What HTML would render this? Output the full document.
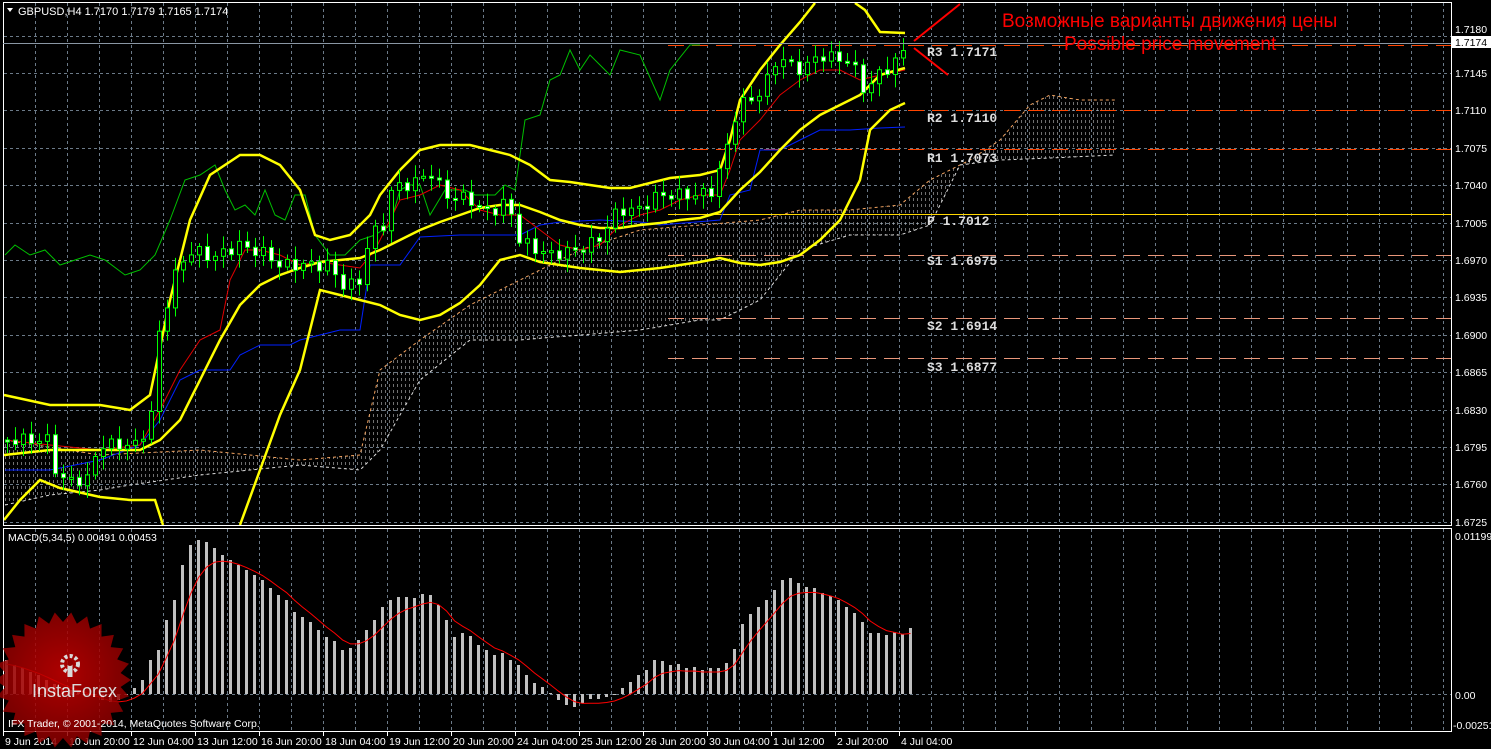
<!DOCTYPE html>
<html><head><meta charset="utf-8"><style>
html,body{margin:0;padding:0;background:#000;width:1491px;height:749px;overflow:hidden}
svg{display:block}
text{font-family:"Liberation Sans",sans-serif}
</style></head><body>
<svg id="s" width="1491" height="749" xmlns="http://www.w3.org/2000/svg">
<defs>
<pattern id="hatch" width="4" height="6" patternUnits="userSpaceOnUse"><rect x="1" y="0" width="1" height="3" fill="#bbb"/></pattern>
<radialGradient id="lg" cx="50%" cy="45%" r="55%"><stop offset="0" stop-color="#c00"/><stop offset="1" stop-color="#800"/></radialGradient>
</defs>
<rect width="1491" height="749" fill="#000"/>
<g id="grid" stroke="#6b7a88" stroke-width="1" stroke-dasharray="3,3"></g>
<g id="cloud"></g>
<g id="piv"></g>
<g id="lines" fill="none"></g>
<g id="candles"></g>
<g id="macd"></g>
<rect x="3.5" y="2.5" width="1448" height="523" fill="none" stroke="#fff"/>
<rect x="3.5" y="528.5" width="1448" height="203" fill="none" stroke="#fff"/>
<line x1="3" y1="43.5" x2="1451" y2="43.5" stroke="#8a97a4"/>
<path d="M7 8 L13 8 L10 12 Z" fill="#fff"/>
<text x="18" y="15" font-size="11" fill="#fff">GBPUSD,H4  1.7170 1.7179 1.7165 1.7174</text>
<text x="8" y="541" font-size="10.5" fill="#fff">MACD(5,34,5) 0.00491 0.00453</text>
<g font-size="10.5" fill="#fff" id="ylab"></g>
<rect x="1452" y="36" width="39" height="12" fill="#fff"/>
<text x="1455" y="46" font-size="10.5" fill="#000">1.7174</text>
<g font-size="10.5" fill="#fff">
<text x="1455" y="540">0.01199</text>
<text x="1455" y="699">0.00</text>
<text x="1453" y="729">-0.00251</text>
</g>
<g font-size="10.5" fill="#fff" id="xlab"></g>
<g font-weight="bold" font-size="13" fill="#ddd">
<text x="927" y="56" style="font-family:'Liberation Mono',monospace">R3 1.7171</text>
<text x="927" y="122" style="font-family:'Liberation Mono',monospace">R2 1.7110</text>
<text x="927" y="162" style="font-family:'Liberation Mono',monospace">R1 1.7073</text>
<text x="927" y="225" style="font-family:'Liberation Mono',monospace">P 1.7012</text>
<text x="927" y="265" style="font-family:'Liberation Mono',monospace">S1 1.6975</text>
<text x="927" y="330" style="font-family:'Liberation Mono',monospace">S2 1.6914</text>
<text x="927" y="371" style="font-family:'Liberation Mono',monospace">S3 1.6877</text>
</g>
<line x1="914" y1="41" x2="960" y2="4" stroke="#f00" stroke-width="2"/>
<line x1="914" y1="48" x2="948" y2="75" stroke="#f00" stroke-width="2"/>
<text x="1002" y="27" font-size="19" fill="#f00">Возможные варианты движения цены</text>
<text x="1064" y="50" font-size="19" fill="#f00">Possible price movement</text>
<g opacity="0.85">
<polygon id="star" fill="url(#lg)"/>
<g fill="#fff">
<circle cx="70" cy="664" r="8" fill="none" stroke="#fff" stroke-width="4" stroke-dasharray="3,2.3"/>
<rect x="67.5" y="664" width="5" height="13"/>
<circle cx="70" cy="663" r="3" fill="#a00"/>
</g>
<text x="32" y="697" font-size="18" fill="#fff">InstaForex</text>
</g>
<text x="8" y="727" font-size="10.5" fill="#fff">IFX Trader, © 2001-2014, MetaQuotes Software Corp.</text>
</svg>
<script>
(function(){
var NS="http://www.w3.org/2000/svg";
function el(p,t,a){var e=document.createElementNS(NS,t);for(var k in a)e.setAttribute(k,a[k]);document.getElementById(p).appendChild(e);return e;}
for(var x=35;x<=1443;x+=32){el('grid','line',{x1:x+.5,y1:3,x2:x+.5,y2:525});el('grid','line',{x1:x+.5,y1:529,x2:x+.5,y2:731});}
var ylabs=["1.7180","1.7145","1.7110","1.7075","1.7040","1.7005","1.6970","1.6935","1.6900","1.6865","1.6830","1.6795","1.6760","1.6725"];
ylabs.forEach(function(l,i){var y=Math.round(35.5+i*37.4);el('grid','line',{x1:4,y1:y+.5,x2:1451,y2:y+.5});
 if(i>0){var t=el('ylab','text',{x:1455,y:y+4});t.textContent=l;}});
el('grid','line',{x1:4,y1:694.5,x2:1451,y2:694.5});
var t0=el('ylab','text',{x:1455,y:33});t0.textContent="1.7180";
var xl=["9 Jun 2014","10 Jun 20:00","12 Jun 04:00","13 Jun 12:00","16 Jun 20:00","18 Jun 04:00","19 Jun 12:00","20 Jun 20:00","24 Jun 04:00","25 Jun 12:00","26 Jun 20:00","30 Jun 04:00","1 Jul 12:00","2 Jul 20:00","4 Jul 04:00"];
xl.forEach(function(l,i){var x=i==0?3:3+i*64;el('xlab','line',{x1:x+.5,y1:732,x2:x+.5,y2:736,stroke:"#fff"});var t=el('xlab','text',{x:x+2,y:745});t.textContent=l;});
var pv=[[45,"#ff4500"],[110,"#ff4500"],[149,"#ff4500"],[255,"#e9967a"],[318,"#e9967a"],[358,"#e9967a"]];
pv.forEach(function(p){el('piv','line',{x1:668,y1:p[0]+.5,x2:1451,y2:p[0]+.5,stroke:p[1],"stroke-dasharray":"16,8"});});
el('piv','line',{x1:668,y1:214.5,x2:1451,y2:214.5,stroke:"#ffd700"});
function interp(pts,x){for(var i=0;i<pts.length-1;i++){var a=pts[i],b=pts[i+1];if(x>=a[0]&&x<=b[0])return a[1]+(b[1]-a[1])*(x-a[0])/(b[0]-a[0]);}return pts[x<pts[0][0]?0:pts.length-1][1];}
function P(s){return s.trim().split(/\s+/).map(function(v){return v.split(':').map(Number);});}
function js(p){return p.map(function(q){return q.join(',');}).join(' ');}
function pl(pts,c,w){el('lines','polyline',{points:js(pts),stroke:c,"stroke-width":w});}
var ctop=P("5:440 100:455 200:450 300:460 360:455 380:370 420:340 470:305 520:280 580:250 640:230 700:225 760:220 800:210 850:210 900:205 930:180 970:160 1000:140 1030:105 1050:95 1080:100 1115:100");
var cbot=P("5:505 50:495 100:490 130:485 200:475 300:465 360:470 380:450 420:380 470:340 520:340 580:335 640:330 700:320 720:320 760:300 800:250 850:235 900:235 930:225 960:165 1000:160 1050:158 1115:155");
el('cloud','polygon',{points:js(ctop.concat(cbot.slice().reverse())),fill:"url(#hatch)",opacity:"0.6"});
el('cloud','polyline',{points:js(ctop),fill:"none",stroke:"#f4a460","stroke-dasharray":"3,3"});
el('cloud','polyline',{points:js(cbot),fill:"none",stroke:"#ddd","stroke-dasharray":"3,3"});
pl(P("5:255 15:245 30:255 45:250 60:265 75:260 90:255 105:260 125:275 140:270 155:255 170:220 185:180 200:175 215:165 225:190 235:210 245:205 255:215 265:190 275:215 285:220 295:195 305:195 315:235 330:255 345:255 360:240 375:235 390:225 400:190 410:185 420:185 430:215 445:190 465:190 475:195 495:195 505:185 515:190 525:120 540:115 550:80 560:75 570:50 580:70 590:55 600:65 610:75 620:50 640:55 660:100 670:70 690:45 700:45"),"#00c000",1);
pl(P("5:470 50:470 100:460 140:445 160:420 180:380 200:370 230:370 240:355 260:345 290:345 300:340 320:335 340:330 360:330 370:265 400:265 420:237 460:235 520:235 540:225 560:222 600:220 640:222 660:225 720:220 730:195 750:190 760:150 780:150 800:140 820:130 850:130 880:128 905:127"),"#0020ff",1);
pl(P("5:440 50:445 100:450 140:445 160:410 180:370 200:340 220:330 230:280 245:250 260:250 280:255 300:265 320:262 340:265 360:268 375:250 400:200 420:195 440:185 460:190 480:210 500:215 520:215 540:230 560:245 580:250 600:245 620:225 640:215 660:210 680:200 700:195 720:195 730:170 740:140 760:120 780:95 800:80 820:70 840:70 860:80 880:75 905:70"),"#e00000",1);
pl(P("4:395 50:405 100:405 130:410 150:395 170:300 190:220 210:175 240:155 260:155 280:165 300:190 315:235 330:240 350:235 370:215 380:195 400:170 420:150 440:145 470:145 490:150 510:155 530:165 550:180 570:182 590:185 610:188 630:188 650:183 670:178 700:175 720:170 730:140 740:100 760:70 780:45 800:22 815:3"),"#ffff00",2.5);
pl(P("855:3 865:10 880:32 905:33"),"#ffff00",2.5);
pl(P("4:455 50:450 100:450 140:450 160:440 180:420 200:380 220:340 240:305 260:285 280:275 300:268 320:262 340:260 360:258 380:250 400:240 420:230 440:222 460:215 480:208 500:205 520:205 540:212 560:220 580:225 600:228 620:228 640:225 660:223 680:220 700:218 720:212 740:190 760:172 780:150 800:130 820:115 840:105 860:95 880:75 905:68"),"#ffff00",2.5);
pl(P("4:520 20:500 40:480 60:488 100:497 130:500 155:500 163:525"),"#ffff00",2.5);
pl(P("240:525 260:470 280:415 300:370 310:330 320:290 340:295 360:300 380:305 400:315 420:320 440:315 460:303 480:285 500:260 520:255 540:262 560:265 580:268 600:270 620:272 640:270 660:268 680:265 700:262 720:258 740:263 760:265 780:262 800:255 820:240 840:220 860:180 870:130 890:110 905:103"),"#ffff00",2.5);
var cl=P("5:440 50:440 60:480 90:480 100:445 140:445 155:410 162:320 170:300 180:265 195:250 215:258 240:245 270:255 280:265 330:265 345:285 360:285 372:235 385:225 395:185 415:185 430:170 440:185 455:200 470:195 480:210 500:210 510:200 520:240 540:250 550:255 580:250 600:240 620:210 640:210 660:195 700:195 715:190 728:150 740:105 752:100 765:90 780:55 790:65 805:70 820:55 835:58 850:60 860:75 868:95 878:75 890:68 900:60 908:45");
var prev=interp(cl,5);
for(var i=0;i<113;i++){var cx=5+8*i;var c=interp(cl,cx+4)+Math.sin(i*2.3)*6;var o=prev;prev=c;
 var hi=Math.min(o,c)-3-Math.abs(Math.sin(i*1.7))*10,lo=Math.max(o,c)+3+Math.abs(Math.cos(i*1.3))*10;
 el('candles','line',{x1:cx+2.5,y1:hi,x2:cx+2.5,y2:lo,stroke:"#00ff00"});
 var bull=c<o;var y=Math.min(o,c),h=Math.max(2,Math.abs(o-c));
 el('candles','rect',{x:cx+.5,y:y,width:4,height:h,fill:bull?"#000":"#fff",stroke:"#00ff00"});}
var m=[660,665,668,672,675,680,684,688,690,692,694,697,700,702,700,695,688,680,660,650,620,600,565,545,540,542,548,555,560,565,570,575,580,588,595,600,612,617,622,630,637,641,650,648,640,630,620,607,600,597,597,598,594,595,605,620,637,633,636,645,650,655,653,660,665,675,683,687,693,700,705,707,703,699,699,697,694,688,682,675,670,660,661,665,664,668,667,670,668,668,663,649,624,614,607,600,590,580,578,583,587,588,593,596,600,607,613,622,633,633,635,632,634,628];
var sig=[];var s=m[0];
m.forEach(function(v,i){var x=5+8*i;if(x>910)return;var y=Math.min(v,694),h=Math.abs(694-v);el('macd','rect',{x:x,y:y,width:3,height:Math.max(1,h),fill:"#c0c0c0"});s=s+(v-s)*0.33;sig.push([x+1.5,s+4]);});
el('macd','polyline',{points:js(sig),fill:"none",stroke:"#f00","stroke-width":1});
var pts=[];var N=26;for(var k=0;k<2*N;k++){var r=k%2?58:68,a=Math.PI*k/N;pts.push((63+r*Math.cos(a)).toFixed(1)+','+(680+r*Math.sin(a)).toFixed(1));}
document.getElementById('star').setAttribute('points',pts.join(' '));
})();
</script>
</body></html>
